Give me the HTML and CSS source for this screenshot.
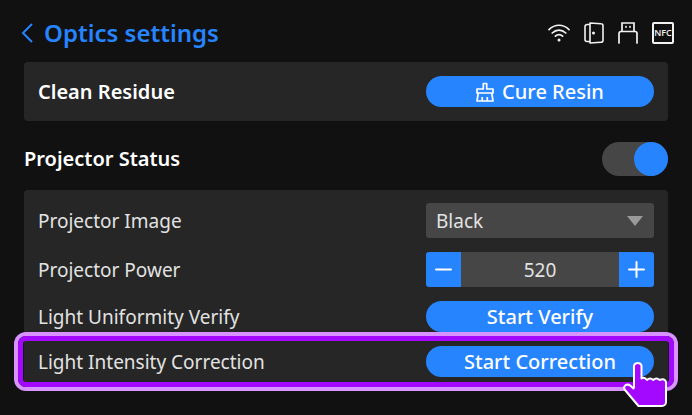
FILE: index.html
```html
<!DOCTYPE html>
<html lang="en">
<head>
    <meta charset="UTF-8">
    <meta name="viewport" content="width=device-width, initial-scale=1.0">
    <title>Optics settings</title>
    <link rel="stylesheet" href="styles.css">
</head>
<body>
    <header class="topbar">
        <a href="#" class="back" aria-label="Back">
            <svg width="12" height="20" viewBox="0 0 12 20" fill="none" stroke="currentColor" stroke-width="2">
                <path d="M11 1L2 10l9 9"/>
            </svg>
        </a>
        <h1>Optics settings</h1>
        <div class="status">
            <!-- wifi -->
            <svg width="22" height="20" viewBox="0 0 22 20" fill="none" stroke="currentColor" stroke-width="1.7" stroke-linecap="round">
                <path d="M1 6.6C6.8 0.8 15.2 0.8 21 6.6M4.2 10c4-3.9 9.6-3.9 13.6 0M7.4 13.2c2.1-2 5.1-2 7.2 0"/>
                <circle cx="11" cy="17" r="1.5" fill="currentColor" stroke="none"/>
            </svg>
            <!-- door -->
            <svg width="20" height="22" viewBox="0 0 20 22" fill="none" stroke="currentColor" stroke-width="1.6" stroke-linejoin="round">
                <path d="M6 1l11 .8a2 2 0 0 1 2 2v14.400a2 2 0 0 1-2 2L6 21zM6 2.500H3a2 2 0 0 0-2 2v13a2 2 0 0 0 2 2h3"/>
                <circle cx="9.500" cy="11" r="1.500" fill="currentColor" stroke="none"/>
            </svg>
            <!-- usb -->
            <svg width="20" height="22" viewBox="0 0 20 22" fill="none" stroke="currentColor" stroke-width="1.7" stroke-linecap="round">
                <path d="M4 9.500V1h12v8.500M1 21V11.500a2 2 0 0 1 2-2h14a2 2 0 0 1 2 2V21"/>
                <path d="M8 4.500v.6M12 4.500v.6"/>
            </svg>
            <span class="nfc">NFC</span>
        </div>
    </header>

    <main>
        <section class="panel">
            <div class="row">
                <h2>Clean Residue</h2>
                <button type="button" class="btn">
                    <svg width="18" height="20" viewBox="0 0 18 20" fill="none" stroke="currentColor" stroke-width="1.700" stroke-linejoin="round">
                        <path d="M7.300 7V1.500h3.400V7H17v4H1V7zM2.300 11L1 19h16l-1.300-8M6.200 19v-4M11.300 19v-4"/>
                    </svg>
                    Cure Resin
                </button>
            </div>
        </section>

        <div class="section-head">
            <h2><label for="projector">Projector Status</label></h2>
            <input type="checkbox" class="toggle" id="projector" checked>
        </div>

        <section class="panel list">
            <div class="row">
                <label for="image">Projector Image</label>
                <div class="select">
                    <select id="image">
                        <option>Black</option>
                        <option>White</option>
                    </select>
                    <svg width="16" height="10" viewBox="0 0 16 10" fill="currentColor"><path d="M0 0h16L8 10z"/></svg>
                </div>
            </div>
            <div class="row">
                <label for="power">Projector Power</label>
                <div class="stepper">
                    <button type="button" aria-label="Decrease">
                        <svg width="17" height="17" viewBox="0 0 17 17" stroke="currentColor" stroke-width="2" stroke-linecap="round"><path d="M1 8.500h15"/></svg>
                    </button>
                    <input type="text" inputmode="numeric" id="power" value="520">
                    <button type="button" aria-label="Increase">
                        <svg width="17" height="17" viewBox="0 0 17 17" stroke="currentColor" stroke-width="2" stroke-linecap="round"><path d="M1 8.500h15M8.500 1v15"/></svg>
                    </button>
                </div>
            </div>
            <div class="row">
                <label for="verify">Light Uniformity Verify</label>
                <button type="button" class="btn" id="verify">Start Verify</button>
            </div>
            <div class="row highlight">
                <label for="correct">Light Intensity Correction</label>
                <button type="button" class="btn" id="correct">Start Correction</button>
                <svg class="pointer" width="44" height="48" viewBox="0 0 44 48" fill="#a409ff" stroke="#fff" stroke-width="2" stroke-linejoin="round">
                    <path d="M11 27V5.500a4 4 0 0 1 7.500 0V18.500q3-2 5.500 1.500 3-3 6.300 0 3-3 6.300 0 5.400-2 6.400 2V42a4 4 0 0 1-4 4H15.500L2 30q-2-3 .5-4.800 2.500-1.400 5 .6l3 2.700z"/>
                </svg>
            </div>
        </section>
    </main>
</body>
</html>
```
FILE: styles.css
```css
* {
    box-sizing: border-box;
}
body {
    margin: 0;
    padding: 12px 24px 24px;
    background: #111;
    color: #e2e2e2;
    font-family: "Noto Sans", sans-serif;
    font-size: 19px;
    line-height: 24px;
}
h1, h2 {
    margin: 0;
    font-weight: 600;
}
h1 {
    color: #2684ff;
    font-size: 24px;
}
h2 {
    color: #fff;
    font-size: 20px;
}
svg {
    display: block;
}
button, input, select {
    margin: 0;
    border: 0;
    font: inherit;
    color: inherit;
}
button {
    cursor: pointer;
}

/* top bar */
.topbar {
    display: flex;
    align-items: center;
    gap: 11px;
    height: 42px;
    margin-bottom: 8px;
}
.back {
    color: #2684ff;
    margin-left: -3px;
}
.status {
    display: flex;
    align-items: center;
    gap: 14px;
    margin-left: auto;
    margin-right: -6px;
    color: #f2f2f2;
}
.nfc {
    width: 22px;
    height: 22px;
    border: 2px solid currentColor;
    border-radius: 2px;
    font-family: "Open Sans", sans-serif;
    font-size: 9px;
    font-weight: 600;
    line-height: 18px;
    text-align: center;
}

/* panels */
.panel {
    padding: 14px;
    background: #262626;
    border-radius: 4px;
}
.list {
    display: grid;
    gap: 14px;
    padding: 13px 14px 10px;
}
.row {
    display: grid;
    grid-template-columns: 1fr 228px;
    align-items: center;
}
.section-head {
    display: flex;
    align-items: center;
    justify-content: space-between;
    padding: 21px 0 14px;
}

/* controls */
.btn {
    display: flex;
    align-items: center;
    justify-content: center;
    gap: 8px;
    height: 31px;
    padding: 0;
    border-radius: 16px;
    background: #2684ff;
    color: #fff;
    font-size: 20px;
    font-weight: 500;
}
.toggle {
    appearance: none;
    width: 66px;
    height: 34px;
    border-radius: 17px;
    background: #464646;
    cursor: pointer;
}
.toggle::before {
    content: "";
    display: block;
    width: 34px;
    height: 34px;
    border-radius: 50%;
    background: #8c8c8c;
}
.toggle:checked::before {
    margin-left: auto;
    background: #2684ff;
}
.select {
    position: relative;
}
.select select {
    appearance: none;
    display: block;
    width: 100%;
    height: 35px;
    padding: 0 36px 0 10px;
    border-radius: 3px;
    background: #464646;
}
.select svg {
    position: absolute;
    top: 13px;
    right: 11px;
    color: #9a9a9a;
    pointer-events: none;
}
.stepper {
    display: flex;
    height: 35px;
    border-radius: 3px;
    overflow: hidden;
}
.stepper button {
    display: grid;
    place-items: center;
    flex: none;
    width: 35px;
    padding: 0;
    background: #2684ff;
    color: #fff;
}
.stepper input {
    flex: 1;
    min-width: 0;
    padding: 0;
    background: #464646;
    text-align: center;
}

/* highlighted row */
.highlight {
    position: relative;
}
.highlight::after {
    content: "";
    position: absolute;
    inset: -10px -20px;
    border: 5px solid #a409ff;
    border-radius: 8px;
    box-shadow: 0 0 0 4px #d893ff;
    pointer-events: none;
}
.pointer {
    position: absolute;
    z-index: 1;
    top: 14px;
    right: -13px;
    pointer-events: none;
}
```
